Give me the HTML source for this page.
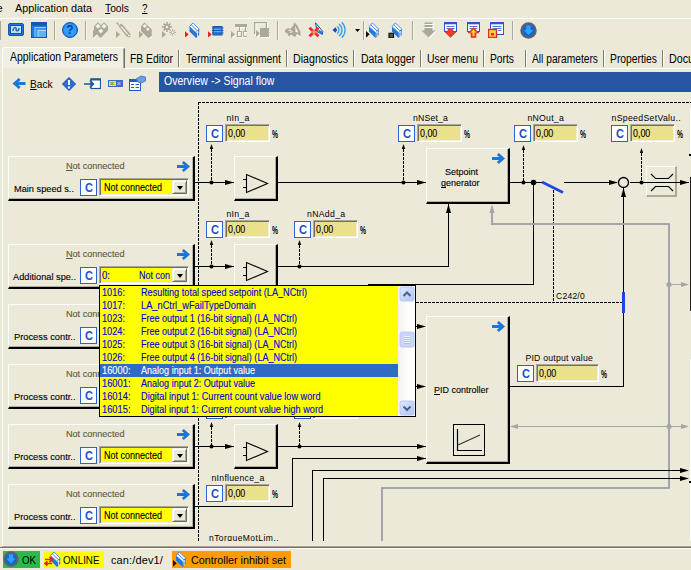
<!DOCTYPE html><html><head><meta charset="utf-8"><title>Signal flow</title><style>

html,body{margin:0;padding:0}
body{width:691px;height:570px;overflow:hidden;background:#ECE9D8;position:relative;font-family:"Liberation Sans", sans-serif;}
.abs{position:absolute}
.t{position:absolute;white-space:pre;line-height:normal;transform-origin:0 0;}
.t u{text-decoration:underline;text-underline-offset:1px;text-decoration-skip-ink:none}
.blk{position:absolute;box-shadow:inset -1px -1px 0 rgba(0,0,0,.25);background:#ECE9D8;border-top:1px solid #fff;border-left:1px solid #fff;border-right:2px solid #000;border-bottom:2px solid #000;z-index:2}
.blk3{position:absolute;background:#ECE9D8;border-top:1px solid #fff;border-left:1px solid #fff;border-right:3px solid #000;border-bottom:3px solid #000;z-index:2}
.cb{position:absolute;width:15px;height:15px;border:1px solid #2A62D0;background:#fff}
.vf{position:absolute;height:18px;box-sizing:border-box;background:#EBE08C;border:1px solid;border-color:#ACA899 #fff #fff #ACA899;box-shadow:inset 1px 1px 0 #716F64,inset -1px -1px 0 #F1EFE2}
.combo{position:absolute;width:90px;height:18px;z-index:3;box-sizing:border-box;border:1px solid;border-color:#ACA899 #fff #fff #ACA899;box-shadow:inset 1px 1px 0 #716F64,inset -1px -1px 0 #F1EFE2;background:#FFFF00}
.combo .cy{display:none}
.combo .cbtn{position:absolute;left:72px;top:1px;width:15px;height:14px;box-sizing:border-box;background:#ECE9D8;border:1px solid;border-color:#F1EFE2 #716F64 #716F64 #F1EFE2;box-shadow:inset 1px 1px 0 #fff,inset -1px -1px 0 #ACA899}
.combo .cbtn i{position:absolute;left:4px;top:5px;width:0;height:0;border-left:3.5px solid transparent;border-right:3.5px solid transparent;border-top:4px solid #000}
.clipb{}

</style></head><body>
<svg class="abs" style="left:0;top:0;z-index:1" width="691" height="570" viewBox="0 0 691 570" shape-rendering="crispEdges">
<rect x="198" y="102" width="3" height="1" fill="#000"/>
<rect x="202" y="102" width="3" height="1" fill="#000"/>
<rect x="206" y="102" width="3" height="1" fill="#000"/>
<rect x="210" y="102" width="3" height="1" fill="#000"/>
<rect x="214" y="102" width="3" height="1" fill="#000"/>
<rect x="218" y="102" width="3" height="1" fill="#000"/>
<rect x="222" y="102" width="3" height="1" fill="#000"/>
<rect x="226" y="102" width="3" height="1" fill="#000"/>
<rect x="230" y="102" width="3" height="1" fill="#000"/>
<rect x="234" y="102" width="3" height="1" fill="#000"/>
<rect x="238" y="102" width="3" height="1" fill="#000"/>
<rect x="242" y="102" width="3" height="1" fill="#000"/>
<rect x="246" y="102" width="3" height="1" fill="#000"/>
<rect x="250" y="102" width="3" height="1" fill="#000"/>
<rect x="254" y="102" width="3" height="1" fill="#000"/>
<rect x="258" y="102" width="3" height="1" fill="#000"/>
<rect x="262" y="102" width="3" height="1" fill="#000"/>
<rect x="266" y="102" width="3" height="1" fill="#000"/>
<rect x="270" y="102" width="3" height="1" fill="#000"/>
<rect x="274" y="102" width="3" height="1" fill="#000"/>
<rect x="278" y="102" width="3" height="1" fill="#000"/>
<rect x="282" y="102" width="3" height="1" fill="#000"/>
<rect x="286" y="102" width="3" height="1" fill="#000"/>
<rect x="290" y="102" width="3" height="1" fill="#000"/>
<rect x="294" y="102" width="3" height="1" fill="#000"/>
<rect x="298" y="102" width="3" height="1" fill="#000"/>
<rect x="302" y="102" width="3" height="1" fill="#000"/>
<rect x="306" y="102" width="3" height="1" fill="#000"/>
<rect x="310" y="102" width="3" height="1" fill="#000"/>
<rect x="314" y="102" width="3" height="1" fill="#000"/>
<rect x="318" y="102" width="3" height="1" fill="#000"/>
<rect x="322" y="102" width="3" height="1" fill="#000"/>
<rect x="326" y="102" width="3" height="1" fill="#000"/>
<rect x="330" y="102" width="3" height="1" fill="#000"/>
<rect x="334" y="102" width="3" height="1" fill="#000"/>
<rect x="338" y="102" width="3" height="1" fill="#000"/>
<rect x="342" y="102" width="3" height="1" fill="#000"/>
<rect x="346" y="102" width="3" height="1" fill="#000"/>
<rect x="350" y="102" width="3" height="1" fill="#000"/>
<rect x="354" y="102" width="3" height="1" fill="#000"/>
<rect x="358" y="102" width="3" height="1" fill="#000"/>
<rect x="362" y="102" width="3" height="1" fill="#000"/>
<rect x="366" y="102" width="3" height="1" fill="#000"/>
<rect x="370" y="102" width="3" height="1" fill="#000"/>
<rect x="374" y="102" width="3" height="1" fill="#000"/>
<rect x="378" y="102" width="3" height="1" fill="#000"/>
<rect x="382" y="102" width="3" height="1" fill="#000"/>
<rect x="386" y="102" width="3" height="1" fill="#000"/>
<rect x="390" y="102" width="3" height="1" fill="#000"/>
<rect x="394" y="102" width="3" height="1" fill="#000"/>
<rect x="398" y="102" width="3" height="1" fill="#000"/>
<rect x="402" y="102" width="3" height="1" fill="#000"/>
<rect x="406" y="102" width="3" height="1" fill="#000"/>
<rect x="410" y="102" width="3" height="1" fill="#000"/>
<rect x="414" y="102" width="3" height="1" fill="#000"/>
<rect x="418" y="102" width="3" height="1" fill="#000"/>
<rect x="422" y="102" width="3" height="1" fill="#000"/>
<rect x="426" y="102" width="3" height="1" fill="#000"/>
<rect x="430" y="102" width="3" height="1" fill="#000"/>
<rect x="434" y="102" width="3" height="1" fill="#000"/>
<rect x="438" y="102" width="3" height="1" fill="#000"/>
<rect x="442" y="102" width="3" height="1" fill="#000"/>
<rect x="446" y="102" width="3" height="1" fill="#000"/>
<rect x="450" y="102" width="3" height="1" fill="#000"/>
<rect x="454" y="102" width="3" height="1" fill="#000"/>
<rect x="458" y="102" width="3" height="1" fill="#000"/>
<rect x="462" y="102" width="3" height="1" fill="#000"/>
<rect x="466" y="102" width="3" height="1" fill="#000"/>
<rect x="470" y="102" width="3" height="1" fill="#000"/>
<rect x="474" y="102" width="3" height="1" fill="#000"/>
<rect x="478" y="102" width="3" height="1" fill="#000"/>
<rect x="482" y="102" width="3" height="1" fill="#000"/>
<rect x="486" y="102" width="3" height="1" fill="#000"/>
<rect x="490" y="102" width="3" height="1" fill="#000"/>
<rect x="494" y="102" width="3" height="1" fill="#000"/>
<rect x="498" y="102" width="3" height="1" fill="#000"/>
<rect x="502" y="102" width="3" height="1" fill="#000"/>
<rect x="506" y="102" width="3" height="1" fill="#000"/>
<rect x="510" y="102" width="3" height="1" fill="#000"/>
<rect x="514" y="102" width="3" height="1" fill="#000"/>
<rect x="518" y="102" width="3" height="1" fill="#000"/>
<rect x="522" y="102" width="3" height="1" fill="#000"/>
<rect x="526" y="102" width="3" height="1" fill="#000"/>
<rect x="530" y="102" width="3" height="1" fill="#000"/>
<rect x="534" y="102" width="3" height="1" fill="#000"/>
<rect x="538" y="102" width="3" height="1" fill="#000"/>
<rect x="542" y="102" width="3" height="1" fill="#000"/>
<rect x="546" y="102" width="3" height="1" fill="#000"/>
<rect x="550" y="102" width="3" height="1" fill="#000"/>
<rect x="554" y="102" width="3" height="1" fill="#000"/>
<rect x="558" y="102" width="3" height="1" fill="#000"/>
<rect x="562" y="102" width="3" height="1" fill="#000"/>
<rect x="566" y="102" width="3" height="1" fill="#000"/>
<rect x="570" y="102" width="3" height="1" fill="#000"/>
<rect x="574" y="102" width="3" height="1" fill="#000"/>
<rect x="578" y="102" width="3" height="1" fill="#000"/>
<rect x="582" y="102" width="3" height="1" fill="#000"/>
<rect x="586" y="102" width="3" height="1" fill="#000"/>
<rect x="590" y="102" width="3" height="1" fill="#000"/>
<rect x="594" y="102" width="3" height="1" fill="#000"/>
<rect x="598" y="102" width="3" height="1" fill="#000"/>
<rect x="602" y="102" width="3" height="1" fill="#000"/>
<rect x="606" y="102" width="3" height="1" fill="#000"/>
<rect x="610" y="102" width="3" height="1" fill="#000"/>
<rect x="614" y="102" width="3" height="1" fill="#000"/>
<rect x="618" y="102" width="3" height="1" fill="#000"/>
<rect x="622" y="102" width="3" height="1" fill="#000"/>
<rect x="626" y="102" width="3" height="1" fill="#000"/>
<rect x="630" y="102" width="3" height="1" fill="#000"/>
<rect x="634" y="102" width="3" height="1" fill="#000"/>
<rect x="638" y="102" width="3" height="1" fill="#000"/>
<rect x="642" y="102" width="3" height="1" fill="#000"/>
<rect x="646" y="102" width="3" height="1" fill="#000"/>
<rect x="650" y="102" width="3" height="1" fill="#000"/>
<rect x="654" y="102" width="3" height="1" fill="#000"/>
<rect x="658" y="102" width="3" height="1" fill="#000"/>
<rect x="662" y="102" width="3" height="1" fill="#000"/>
<rect x="666" y="102" width="3" height="1" fill="#000"/>
<rect x="670" y="102" width="3" height="1" fill="#000"/>
<rect x="674" y="102" width="3" height="1" fill="#000"/>
<rect x="678" y="102" width="3" height="1" fill="#000"/>
<rect x="682" y="102" width="3" height="1" fill="#000"/>
<rect x="686" y="102" width="3" height="1" fill="#000"/>
<rect x="690" y="102" width="1" height="1" fill="#000"/>
<rect x="198" y="102" width="1" height="3" fill="#000"/>
<rect x="198" y="106" width="1" height="3" fill="#000"/>
<rect x="198" y="110" width="1" height="3" fill="#000"/>
<rect x="198" y="114" width="1" height="3" fill="#000"/>
<rect x="198" y="118" width="1" height="3" fill="#000"/>
<rect x="198" y="122" width="1" height="3" fill="#000"/>
<rect x="198" y="126" width="1" height="3" fill="#000"/>
<rect x="198" y="130" width="1" height="3" fill="#000"/>
<rect x="198" y="134" width="1" height="3" fill="#000"/>
<rect x="198" y="138" width="1" height="3" fill="#000"/>
<rect x="198" y="142" width="1" height="3" fill="#000"/>
<rect x="198" y="146" width="1" height="3" fill="#000"/>
<rect x="198" y="150" width="1" height="3" fill="#000"/>
<rect x="198" y="154" width="1" height="3" fill="#000"/>
<rect x="198" y="158" width="1" height="3" fill="#000"/>
<rect x="198" y="162" width="1" height="3" fill="#000"/>
<rect x="198" y="166" width="1" height="3" fill="#000"/>
<rect x="198" y="170" width="1" height="3" fill="#000"/>
<rect x="198" y="174" width="1" height="3" fill="#000"/>
<rect x="198" y="178" width="1" height="3" fill="#000"/>
<rect x="198" y="182" width="1" height="3" fill="#000"/>
<rect x="198" y="186" width="1" height="3" fill="#000"/>
<rect x="198" y="190" width="1" height="3" fill="#000"/>
<rect x="198" y="194" width="1" height="3" fill="#000"/>
<rect x="198" y="198" width="1" height="3" fill="#000"/>
<rect x="198" y="202" width="1" height="3" fill="#000"/>
<rect x="198" y="206" width="1" height="3" fill="#000"/>
<rect x="198" y="210" width="1" height="3" fill="#000"/>
<rect x="198" y="214" width="1" height="3" fill="#000"/>
<rect x="198" y="218" width="1" height="3" fill="#000"/>
<rect x="198" y="222" width="1" height="3" fill="#000"/>
<rect x="198" y="226" width="1" height="3" fill="#000"/>
<rect x="198" y="230" width="1" height="3" fill="#000"/>
<rect x="198" y="234" width="1" height="3" fill="#000"/>
<rect x="198" y="238" width="1" height="3" fill="#000"/>
<rect x="198" y="242" width="1" height="3" fill="#000"/>
<rect x="198" y="246" width="1" height="3" fill="#000"/>
<rect x="198" y="250" width="1" height="3" fill="#000"/>
<rect x="198" y="254" width="1" height="3" fill="#000"/>
<rect x="198" y="258" width="1" height="3" fill="#000"/>
<rect x="198" y="262" width="1" height="3" fill="#000"/>
<rect x="198" y="266" width="1" height="3" fill="#000"/>
<rect x="198" y="270" width="1" height="3" fill="#000"/>
<rect x="198" y="274" width="1" height="3" fill="#000"/>
<rect x="198" y="278" width="1" height="3" fill="#000"/>
<rect x="198" y="282" width="1" height="3" fill="#000"/>
<rect x="198" y="286" width="1" height="3" fill="#000"/>
<rect x="198" y="290" width="1" height="3" fill="#000"/>
<rect x="198" y="294" width="1" height="3" fill="#000"/>
<rect x="198" y="298" width="1" height="3" fill="#000"/>
<rect x="198" y="302" width="1" height="3" fill="#000"/>
<rect x="198" y="306" width="1" height="3" fill="#000"/>
<rect x="198" y="310" width="1" height="3" fill="#000"/>
<rect x="198" y="314" width="1" height="3" fill="#000"/>
<rect x="198" y="318" width="1" height="3" fill="#000"/>
<rect x="198" y="322" width="1" height="3" fill="#000"/>
<rect x="198" y="326" width="1" height="3" fill="#000"/>
<rect x="198" y="330" width="1" height="3" fill="#000"/>
<rect x="198" y="334" width="1" height="3" fill="#000"/>
<rect x="198" y="338" width="1" height="3" fill="#000"/>
<rect x="198" y="342" width="1" height="3" fill="#000"/>
<rect x="198" y="346" width="1" height="3" fill="#000"/>
<rect x="198" y="350" width="1" height="3" fill="#000"/>
<rect x="198" y="354" width="1" height="3" fill="#000"/>
<rect x="198" y="358" width="1" height="3" fill="#000"/>
<rect x="198" y="362" width="1" height="3" fill="#000"/>
<rect x="198" y="366" width="1" height="3" fill="#000"/>
<rect x="198" y="370" width="1" height="3" fill="#000"/>
<rect x="198" y="374" width="1" height="3" fill="#000"/>
<rect x="198" y="378" width="1" height="3" fill="#000"/>
<rect x="198" y="382" width="1" height="3" fill="#000"/>
<rect x="198" y="386" width="1" height="3" fill="#000"/>
<rect x="198" y="390" width="1" height="3" fill="#000"/>
<rect x="198" y="394" width="1" height="3" fill="#000"/>
<rect x="198" y="398" width="1" height="3" fill="#000"/>
<rect x="198" y="402" width="1" height="3" fill="#000"/>
<rect x="198" y="406" width="1" height="3" fill="#000"/>
<rect x="198" y="410" width="1" height="3" fill="#000"/>
<rect x="198" y="414" width="1" height="3" fill="#000"/>
<rect x="198" y="418" width="1" height="3" fill="#000"/>
<rect x="198" y="422" width="1" height="3" fill="#000"/>
<rect x="198" y="426" width="1" height="3" fill="#000"/>
<rect x="198" y="430" width="1" height="3" fill="#000"/>
<rect x="198" y="434" width="1" height="3" fill="#000"/>
<rect x="198" y="438" width="1" height="3" fill="#000"/>
<rect x="198" y="442" width="1" height="3" fill="#000"/>
<rect x="198" y="446" width="1" height="3" fill="#000"/>
<rect x="198" y="450" width="1" height="3" fill="#000"/>
<rect x="198" y="454" width="1" height="3" fill="#000"/>
<rect x="198" y="458" width="1" height="3" fill="#000"/>
<rect x="198" y="462" width="1" height="3" fill="#000"/>
<rect x="198" y="466" width="1" height="3" fill="#000"/>
<rect x="198" y="470" width="1" height="3" fill="#000"/>
<rect x="198" y="474" width="1" height="3" fill="#000"/>
<rect x="198" y="478" width="1" height="3" fill="#000"/>
<rect x="198" y="482" width="1" height="3" fill="#000"/>
<rect x="198" y="486" width="1" height="3" fill="#000"/>
<rect x="198" y="490" width="1" height="3" fill="#000"/>
<rect x="198" y="494" width="1" height="3" fill="#000"/>
<rect x="198" y="498" width="1" height="3" fill="#000"/>
<rect x="198" y="502" width="1" height="3" fill="#000"/>
<rect x="198" y="506" width="1" height="3" fill="#000"/>
<rect x="198" y="510" width="1" height="3" fill="#000"/>
<rect x="198" y="514" width="1" height="3" fill="#000"/>
<rect x="198" y="518" width="1" height="3" fill="#000"/>
<rect x="198" y="522" width="1" height="3" fill="#000"/>
<rect x="198" y="526" width="1" height="3" fill="#000"/>
<rect x="198" y="530" width="1" height="3" fill="#000"/>
<rect x="198" y="534" width="1" height="3" fill="#000"/>
<rect x="198" y="538" width="1" height="3" fill="#000"/>
<rect x="194" y="182" width="40" height="1" fill="#000"/>
<polygon points="234,182.5 225,180.0 225,185.0" fill="#000" shape-rendering="geometricPrecision"/>
<polygon points="211.5,144 209.8,149 213.2,149" fill="#000" shape-rendering="geometricPrecision"/>
<rect x="211" y="149" width="1" height="3" fill="#000"/>
<rect x="211" y="153" width="1" height="3" fill="#000"/>
<rect x="211" y="157" width="1" height="3" fill="#000"/>
<rect x="211" y="161" width="1" height="3" fill="#000"/>
<rect x="211" y="165" width="1" height="3" fill="#000"/>
<rect x="211" y="169" width="1" height="3" fill="#000"/>
<rect x="211" y="173" width="1" height="3" fill="#000"/>
<rect x="211" y="177" width="1" height="3" fill="#000"/>
<rect x="211" y="181" width="1" height="1" fill="#000"/>
<circle cx="211.5" cy="182.5" r="2.1" fill="#000" shape-rendering="geometricPrecision"/>
<rect x="278" y="182" width="148" height="1" fill="#000"/>
<polygon points="426,182.5 417,180.0 417,185.0" fill="#000" shape-rendering="geometricPrecision"/>
<polygon points="403.5,144 401.8,149 405.2,149" fill="#000" shape-rendering="geometricPrecision"/>
<rect x="403" y="149" width="1" height="3" fill="#000"/>
<rect x="403" y="153" width="1" height="3" fill="#000"/>
<rect x="403" y="157" width="1" height="3" fill="#000"/>
<rect x="403" y="161" width="1" height="3" fill="#000"/>
<rect x="403" y="165" width="1" height="3" fill="#000"/>
<rect x="403" y="169" width="1" height="3" fill="#000"/>
<rect x="403" y="173" width="1" height="3" fill="#000"/>
<rect x="403" y="177" width="1" height="3" fill="#000"/>
<rect x="403" y="181" width="1" height="1" fill="#000"/>
<circle cx="403.5" cy="182.5" r="2.1" fill="#000" shape-rendering="geometricPrecision"/>
<rect x="510" y="182" width="33" height="1" fill="#000"/>
<polygon points="523.5,145 521.8,150 525.2,150" fill="#000" shape-rendering="geometricPrecision"/>
<rect x="523" y="150" width="1" height="3" fill="#000"/>
<rect x="523" y="154" width="1" height="3" fill="#000"/>
<rect x="523" y="158" width="1" height="3" fill="#000"/>
<rect x="523" y="162" width="1" height="3" fill="#000"/>
<rect x="523" y="166" width="1" height="3" fill="#000"/>
<rect x="523" y="170" width="1" height="3" fill="#000"/>
<rect x="523" y="174" width="1" height="3" fill="#000"/>
<rect x="523" y="178" width="1" height="3" fill="#000"/>
<circle cx="523.5" cy="182.5" r="2.1" fill="#000" shape-rendering="geometricPrecision"/>
<circle cx="533.5" cy="182.5" r="2.8" fill="#000" shape-rendering="geometricPrecision"/>
<line x1="542" y1="182" x2="563" y2="192.500" stroke="#1E46E6" stroke-width="2.600" shape-rendering="geometricPrecision"/>
<rect x="564" y="182" width="53" height="1" fill="#000"/>
<polygon points="618,182.5 609,180.0 609,185.0" fill="#000" shape-rendering="geometricPrecision"/>
<circle cx="623.500" cy="182.500" r="5" fill="#ECE9D8" stroke="#000" stroke-width="1.300" shape-rendering="geometricPrecision"/>
<rect x="630" y="182" width="59" height="1" fill="#000"/>
<polygon points="641.5,148 639.8,153 643.2,153" fill="#000" shape-rendering="geometricPrecision"/>
<rect x="641" y="153" width="1" height="3" fill="#000"/>
<rect x="641" y="157" width="1" height="3" fill="#000"/>
<rect x="641" y="161" width="1" height="3" fill="#000"/>
<rect x="641" y="165" width="1" height="3" fill="#000"/>
<rect x="641" y="169" width="1" height="3" fill="#000"/>
<rect x="641" y="173" width="1" height="3" fill="#000"/>
<rect x="641" y="177" width="1" height="3" fill="#000"/>
<rect x="641" y="181" width="1" height="1" fill="#000"/>
<circle cx="641.5" cy="182.5" r="2.1" fill="#000" shape-rendering="geometricPrecision"/>
<polygon points="689,182.5 680,180.0 680,185.0" fill="#000" shape-rendering="geometricPrecision"/>
<rect x="533" y="182" width="1" height="103" fill="#000"/>
<rect x="368" y="284" width="166" height="1" fill="#000"/>
<rect x="553" y="190" width="1" height="3" fill="#000"/>
<rect x="553" y="194" width="1" height="3" fill="#000"/>
<rect x="553" y="198" width="1" height="3" fill="#000"/>
<rect x="553" y="202" width="1" height="3" fill="#000"/>
<rect x="553" y="206" width="1" height="3" fill="#000"/>
<rect x="553" y="210" width="1" height="3" fill="#000"/>
<rect x="553" y="214" width="1" height="3" fill="#000"/>
<rect x="553" y="218" width="1" height="3" fill="#000"/>
<rect x="553" y="222" width="1" height="3" fill="#000"/>
<rect x="553" y="226" width="1" height="3" fill="#000"/>
<rect x="553" y="230" width="1" height="3" fill="#000"/>
<rect x="553" y="234" width="1" height="3" fill="#000"/>
<rect x="553" y="238" width="1" height="3" fill="#000"/>
<rect x="553" y="242" width="1" height="3" fill="#000"/>
<rect x="553" y="246" width="1" height="3" fill="#000"/>
<rect x="553" y="250" width="1" height="3" fill="#000"/>
<rect x="553" y="254" width="1" height="3" fill="#000"/>
<rect x="553" y="258" width="1" height="3" fill="#000"/>
<rect x="553" y="262" width="1" height="3" fill="#000"/>
<rect x="553" y="266" width="1" height="3" fill="#000"/>
<rect x="553" y="270" width="1" height="3" fill="#000"/>
<rect x="553" y="274" width="1" height="3" fill="#000"/>
<rect x="553" y="278" width="1" height="3" fill="#000"/>
<rect x="553" y="282" width="1" height="3" fill="#000"/>
<rect x="553" y="286" width="1" height="3" fill="#000"/>
<rect x="553" y="290" width="1" height="3" fill="#000"/>
<rect x="553" y="294" width="1" height="3" fill="#000"/>
<rect x="553" y="298" width="1" height="3" fill="#000"/>
<rect x="553" y="302" width="1" height="1" fill="#000"/>
<rect x="416" y="302" width="3" height="1" fill="#000"/>
<rect x="420" y="302" width="3" height="1" fill="#000"/>
<rect x="424" y="302" width="3" height="1" fill="#000"/>
<rect x="428" y="302" width="3" height="1" fill="#000"/>
<rect x="432" y="302" width="3" height="1" fill="#000"/>
<rect x="436" y="302" width="3" height="1" fill="#000"/>
<rect x="440" y="302" width="3" height="1" fill="#000"/>
<rect x="444" y="302" width="3" height="1" fill="#000"/>
<rect x="448" y="302" width="3" height="1" fill="#000"/>
<rect x="452" y="302" width="3" height="1" fill="#000"/>
<rect x="456" y="302" width="3" height="1" fill="#000"/>
<rect x="460" y="302" width="3" height="1" fill="#000"/>
<rect x="464" y="302" width="3" height="1" fill="#000"/>
<rect x="468" y="302" width="3" height="1" fill="#000"/>
<rect x="472" y="302" width="3" height="1" fill="#000"/>
<rect x="476" y="302" width="3" height="1" fill="#000"/>
<rect x="480" y="302" width="3" height="1" fill="#000"/>
<rect x="484" y="302" width="3" height="1" fill="#000"/>
<rect x="488" y="302" width="3" height="1" fill="#000"/>
<rect x="492" y="302" width="3" height="1" fill="#000"/>
<rect x="496" y="302" width="3" height="1" fill="#000"/>
<rect x="500" y="302" width="3" height="1" fill="#000"/>
<rect x="504" y="302" width="3" height="1" fill="#000"/>
<rect x="508" y="302" width="3" height="1" fill="#000"/>
<rect x="512" y="302" width="3" height="1" fill="#000"/>
<rect x="516" y="302" width="3" height="1" fill="#000"/>
<rect x="520" y="302" width="3" height="1" fill="#000"/>
<rect x="524" y="302" width="3" height="1" fill="#000"/>
<rect x="528" y="302" width="3" height="1" fill="#000"/>
<rect x="532" y="302" width="3" height="1" fill="#000"/>
<rect x="536" y="302" width="3" height="1" fill="#000"/>
<rect x="540" y="302" width="3" height="1" fill="#000"/>
<rect x="544" y="302" width="3" height="1" fill="#000"/>
<rect x="548" y="302" width="3" height="1" fill="#000"/>
<rect x="552" y="302" width="3" height="1" fill="#000"/>
<rect x="556" y="302" width="3" height="1" fill="#000"/>
<rect x="560" y="302" width="3" height="1" fill="#000"/>
<rect x="564" y="302" width="3" height="1" fill="#000"/>
<rect x="568" y="302" width="3" height="1" fill="#000"/>
<rect x="572" y="302" width="3" height="1" fill="#000"/>
<rect x="576" y="302" width="3" height="1" fill="#000"/>
<rect x="580" y="302" width="3" height="1" fill="#000"/>
<rect x="584" y="302" width="3" height="1" fill="#000"/>
<rect x="588" y="302" width="3" height="1" fill="#000"/>
<rect x="592" y="302" width="3" height="1" fill="#000"/>
<rect x="596" y="302" width="3" height="1" fill="#000"/>
<rect x="600" y="302" width="3" height="1" fill="#000"/>
<rect x="604" y="302" width="3" height="1" fill="#000"/>
<rect x="608" y="302" width="3" height="1" fill="#000"/>
<rect x="612" y="302" width="3" height="1" fill="#000"/>
<rect x="616" y="302" width="3" height="1" fill="#000"/>
<rect x="620" y="302" width="2" height="1" fill="#000"/>
<rect x="623" y="188" width="1" height="199" fill="#000"/>
<polygon points="623.5,188 621.0,197 626.0,197" fill="#000" shape-rendering="geometricPrecision"/>
<rect x="622" y="292" width="3" height="21" fill="#1E46E6"/>
<rect x="510" y="386" width="114" height="1" fill="#000"/>
<rect x="194" y="266" width="40" height="1" fill="#000"/>
<polygon points="234,266.5 225,264.0 225,269.0" fill="#000" shape-rendering="geometricPrecision"/>
<polygon points="211.5,240 209.8,245 213.2,245" fill="#000" shape-rendering="geometricPrecision"/>
<rect x="211" y="245" width="1" height="3" fill="#000"/>
<rect x="211" y="249" width="1" height="3" fill="#000"/>
<rect x="211" y="253" width="1" height="3" fill="#000"/>
<rect x="211" y="257" width="1" height="3" fill="#000"/>
<rect x="211" y="261" width="1" height="3" fill="#000"/>
<rect x="211" y="265" width="1" height="1" fill="#000"/>
<circle cx="211.5" cy="266.5" r="2.1" fill="#000" shape-rendering="geometricPrecision"/>
<rect x="278" y="266" width="171" height="1" fill="#000"/>
<polygon points="299.5,240 297.8,245 301.2,245" fill="#000" shape-rendering="geometricPrecision"/>
<rect x="299" y="245" width="1" height="3" fill="#000"/>
<rect x="299" y="249" width="1" height="3" fill="#000"/>
<rect x="299" y="253" width="1" height="3" fill="#000"/>
<rect x="299" y="257" width="1" height="3" fill="#000"/>
<rect x="299" y="261" width="1" height="3" fill="#000"/>
<rect x="299" y="265" width="1" height="1" fill="#000"/>
<circle cx="299.5" cy="266.5" r="2.1" fill="#000" shape-rendering="geometricPrecision"/>
<rect x="448" y="204" width="1" height="63" fill="#000"/>
<polygon points="448.5,204 446.0,213 451.0,213" fill="#000" shape-rendering="geometricPrecision"/>
<rect x="491" y="212" width="2" height="13" fill="#A5A5AB"/>
<polygon points="492,204 489.500,213 494.500,213" fill="#A5A5AB" shape-rendering="geometricPrecision"/>
<rect x="491" y="223" width="179" height="2" fill="#A5A5AB"/>
<rect x="668" y="223" width="2" height="266" fill="#A5A5AB"/>
<rect x="381" y="487" width="289" height="2" fill="#A5A5AB"/>
<rect x="381" y="487" width="2" height="55" fill="#A5A5AB"/>
<circle cx="669.0" cy="284.5" r="2.6" fill="#A5A5AB" shape-rendering="geometricPrecision"/>
<rect x="669" y="284" width="14" height="1" fill="#A5A5AB"/>
<polygon points="689,284.5 681,282.0 681,287.0" fill="#A5A5AB" shape-rendering="geometricPrecision"/>
<circle cx="669.0" cy="426.5" r="2.6" fill="#A5A5AB" shape-rendering="geometricPrecision"/>
<rect x="518" y="426" width="165" height="1" fill="#A5A5AB"/>
<polygon points="689,426.5 681,424.0 681,429.0" fill="#A5A5AB" shape-rendering="geometricPrecision"/>
<polygon points="510,426.5 518,424.0 518,429.0" fill="#A5A5AB" shape-rendering="geometricPrecision"/>
<polygon points="426,326.5 417,324.0 417,329.0" fill="#000" shape-rendering="geometricPrecision"/>
<rect x="416" y="326" width="5" height="1" fill="#000"/>
<polygon points="426,386.5 417,384.0 417,389.0" fill="#000" shape-rendering="geometricPrecision"/>
<rect x="416" y="386" width="5" height="1" fill="#000"/>
<rect x="194" y="446" width="40" height="1" fill="#000"/>
<polygon points="234,446.5 225,444.0 225,449.0" fill="#000" shape-rendering="geometricPrecision"/>
<polygon points="211.5,422 209.8,427 213.2,427" fill="#000" shape-rendering="geometricPrecision"/>
<rect x="211" y="427" width="1" height="3" fill="#000"/>
<rect x="211" y="431" width="1" height="3" fill="#000"/>
<rect x="211" y="435" width="1" height="3" fill="#000"/>
<rect x="211" y="439" width="1" height="3" fill="#000"/>
<rect x="211" y="443" width="1" height="3" fill="#000"/>
<circle cx="211.5" cy="446.5" r="2.1" fill="#000" shape-rendering="geometricPrecision"/>
<rect x="278" y="446" width="148" height="1" fill="#000"/>
<polygon points="426,446.5 417,444.0 417,449.0" fill="#000" shape-rendering="geometricPrecision"/>
<polygon points="299.5,422 297.8,427 301.2,427" fill="#000" shape-rendering="geometricPrecision"/>
<rect x="299" y="427" width="1" height="3" fill="#000"/>
<rect x="299" y="431" width="1" height="3" fill="#000"/>
<rect x="299" y="435" width="1" height="3" fill="#000"/>
<rect x="299" y="439" width="1" height="3" fill="#000"/>
<rect x="299" y="443" width="1" height="3" fill="#000"/>
<circle cx="299.5" cy="446.5" r="2.1" fill="#000" shape-rendering="geometricPrecision"/>
<rect x="194" y="506" width="99" height="1" fill="#000"/>
<rect x="292" y="458" width="1" height="49" fill="#000"/>
<rect x="292" y="458" width="134" height="1" fill="#000"/>
<polygon points="426,458.5 417,456.0 417,461.0" fill="#000" shape-rendering="geometricPrecision"/>
<rect x="312" y="470" width="1" height="72" fill="#000"/>
<rect x="312" y="470" width="369" height="1" fill="#000"/>
<polygon points="689,470.5 680,468.0 680,473.0" fill="#000" shape-rendering="geometricPrecision"/>
<rect x="323" y="478" width="1" height="64" fill="#000"/>
<rect x="323" y="478" width="358" height="1" fill="#000"/>
<polygon points="689,478.5 680,476.0 680,481.0" fill="#000" shape-rendering="geometricPrecision"/>
<rect x="690" y="177" width="1" height="134" fill="#222"/>
<rect x="690" y="108" width="1" height="45" fill="#fff"/>
<rect x="690" y="359" width="1" height="183" fill="#fff"/>
<rect x="689" y="154" width="2" height="2" fill="#000"/>
<rect x="689" y="481" width="2" height="2" fill="#000"/>
</svg>
<div class="abs" style="left:0;top:18px;width:691px;height:1px;background:#fff"></div>
<div class="abs" style="left:54px;top:21px;width:1px;height:19px;background:#ACA899"></div><div class="abs" style="left:55px;top:21px;width:1px;height:19px;background:#F6F4EC"></div>
<div class="abs" style="left:85px;top:21px;width:1px;height:19px;background:#ACA899"></div><div class="abs" style="left:86px;top:21px;width:1px;height:19px;background:#F6F4EC"></div>
<div class="abs" style="left:277px;top:21px;width:1px;height:19px;background:#ACA899"></div><div class="abs" style="left:278px;top:21px;width:1px;height:19px;background:#F6F4EC"></div>
<div class="abs" style="left:363px;top:21px;width:1px;height:19px;background:#ACA899"></div><div class="abs" style="left:364px;top:21px;width:1px;height:19px;background:#F6F4EC"></div>
<div class="abs" style="left:412px;top:21px;width:1px;height:19px;background:#ACA899"></div><div class="abs" style="left:413px;top:21px;width:1px;height:19px;background:#F6F4EC"></div>
<div class="abs" style="left:512px;top:21px;width:1px;height:19px;background:#ACA899"></div><div class="abs" style="left:513px;top:21px;width:1px;height:19px;background:#F6F4EC"></div>
<div class="abs" style="left:0;top:21px;width:1px;height:19px;background:#ACA899"></div>
<svg class="abs" style="left:8px;top:22px" width="16" height="16" viewBox="0 0 16 16"><rect x="0.5" y="1.5" width="15" height="12" rx="1.5" fill="#1E78E0" stroke="#1556B0"/><rect x="2.5" y="3.5" width="11" height="8" fill="#BFE0FF" stroke="#0F4FA8"/><path d="M5 9c0-3 2-4 3-3s-1 3 1 3 2-2 2-3" fill="none" stroke="#0F4FA8" stroke-width="1.2"/></svg>
<svg class="abs" style="left:31px;top:22px" width="16" height="16" viewBox="0 0 16 16"><rect x="0.500" y="0.500" width="15" height="15" fill="#1E78E0" stroke="#1556B0"/><rect x="1" y="1" width="14" height="2.500" fill="#1556B0"/><rect x="4" y="5.500" width="11" height="9.500" fill="#3C94F0"/><rect x="4" y="5" width="11" height="1" fill="#9CCBFF"/><rect x="3.500" y="5" width="1" height="10" fill="#9CCBFF"/><rect x="7" y="8.500" width="8" height="6.500" fill="#64B0FA"/><rect x="7" y="8" width="8" height="1" fill="#B8DCFF"/><rect x="6.500" y="8" width="1" height="7" fill="#B8DCFF"/></svg>
<svg class="abs" style="left:62px;top:22px" width="16" height="16" viewBox="0 0 16 16"><circle cx="8" cy="8" r="7.5" fill="#1E8CF0" stroke="#1556B0"/><circle cx="8" cy="8" r="6" fill="#2FA0FF"/><text x="8" y="12.2" font-size="12" font-weight="bold" text-anchor="middle" fill="#0A3C96" font-family="Liberation Sans, sans-serif">?</text></svg>
<svg class="abs" style="left:92px;top:22px" width="16" height="16" viewBox="0 0 16 16"><path d="M2 4.300L6 0.300L9 3.300L12 0.300L16 4.300V8.500L8.700 16L5 12.500L1 16V9L2 8Z" fill="#ACA899"/><path d="M6 1.800L8.500 4.300L6 6.800L3.500 4.300ZM12 1.800L14.500 4.300L12 6.800L9.500 4.300ZM8.800 6.500L11.300 9L8.800 11.500L6.300 9Z" fill="#F4F2EA"/><path d="M5 12.700L1.500 16.500" stroke="#fff"/></svg>
<svg class="abs" style="left:115px;top:22px" width="16" height="16" viewBox="0 0 16 16"><path d="M1 9L5 12.500L1 16Z" fill="#ACA899"/><path d="M1.500 0.500L4 3" stroke="#ACA899" stroke-width="1.200"/><path d="M3.500 4L6.500 1.500L15.500 12L15 15.500L11.500 14.500Z" fill="#ACA899"/><path d="M6 4.500L12.500 12" stroke="#F4F2EA" stroke-width="1.200"/><circle cx="13.800" cy="13.300" r="0.900" fill="#fff"/></svg>
<svg class="abs" style="left:138px;top:22px" width="16" height="16" viewBox="0 0 16 16"><path d="M1 9L5 12.500L1 16Z" fill="#ACA899"/><path d="M6.300 0.500L13.700 7.300V14L10.500 16.200L3 9V4.500Z" fill="#ACA899"/><path d="M6.700 2L8.700 4L6.700 6L4.700 4ZM9.800 5.500L11.600 7.300L9.800 9.100L8 7.300Z" fill="#F4F2EA"/><path d="M11 16.500L14.500 14.300" stroke="#fff"/></svg>
<svg class="abs" style="left:161px;top:22px" width="16" height="16" viewBox="0 0 16 16"><path d="M1 9L5 12.500L1 16Z" fill="#ACA899"/><path d="M10.9 4.1L10.9 5.9L9.1 5.7L8.7 6.7L10.1 7.8L8.8 9.1L7.7 7.7L6.7 8.1L6.9 9.9L5.1 9.9L5.3 8.1L4.3 7.7L3.2 9.1L1.9 7.8L3.3 6.7L2.9 5.7L1.1 5.9L1.1 4.1L2.9 4.3L3.3 3.3L1.9 2.2L3.2 0.9L4.3 2.3L5.3 1.9L5.1 0.1L6.9 0.1L6.7 1.9L7.7 2.3L8.8 0.9L10.1 2.2L8.7 3.3L9.1 4.3Z" fill="#ACA899"/><circle cx="6" cy="5" r="1.200" fill="#F4F2EA"/><circle cx="11.700" cy="10.300" r="3.300" fill="#F4F2EA"/><path d="M11.700 6.800V13.800M8.200 10.300H15.200M9.200 7.800L14.200 12.800M14.200 7.800L9.200 12.800" stroke="#ACA899" stroke-width="1"/><circle cx="11.700" cy="10.300" r="1" fill="#F4F2EA"/></svg>
<svg class="abs" style="left:184px;top:22px" width="16" height="16" viewBox="0 0 16 16"><path d="M1 9.300L4.700 12.400L1 15.500Z" fill="#F01E14"/><g transform="translate(1.500,0)"><path d="M4 4.700L10.500 10.500V16L4 9.500Z" fill="#1E78E0"/><path d="M4 4.700L7.300 1L13.700 7L10.500 10.500Z" fill="#fff" stroke="#1E78E0" stroke-width=".8"/><path d="M5.700 2.800L12 8.800" stroke="#1E78E0" stroke-width=".9"/><path d="M10.500 10.500L13.700 7V13L10.500 16Z" fill="#2C6CD8"/><path d="M12.100 9.500V14.500M11 11L12.100 9.300L13.200 10.500" fill="none" stroke="#E4F2FF" stroke-width="1"/></g></svg>
<svg class="abs" style="left:208px;top:22px" width="16" height="16" viewBox="0 0 16 16"><path d="M0 9.300L3.700 12.400L0 15.500Z" fill="#F01E14"/><rect x="5" y="4.500" width="9" height="8.500" fill="#2C7CE0" stroke="#1556B0"/><path d="M4 6H15.500M4 8.500H15.500M4 11H15.500" stroke="#1556B0" stroke-width="1.200"/><path d="M6 7.200H13M6 9.700H13" stroke="#6CB4FF" stroke-width="1"/></svg>
<svg class="abs" style="left:231px;top:22px" width="16" height="16" viewBox="0 0 16 16"><g transform="translate(1,1)"><path d="M0 9L4 12.5L0 16ZM4 2H17V5H4Z" fill="#fff"/><path d="M6.500 9.500H10.500V14.500H6.500ZM12.500 9.500H16.500V14.500H12.500ZM8.500 5V9M14.500 5V9" fill="none" stroke="#fff" stroke-width="1.2"/></g><g transform="translate(0,0)"><path d="M0 9L4 12.5L0 16ZM4 2H17V5H4Z" fill="#ACA899"/><path d="M6.500 9.500H10.500V14.500H6.500ZM12.500 9.500H16.500V14.500H12.500ZM8.500 5V9M14.500 5V9" fill="none" stroke="#ACA899" stroke-width="1.2"/></g></svg>
<svg class="abs" style="left:254px;top:22px" width="16" height="16" viewBox="0 0 16 16"><g transform="translate(1,1)"><path d="M2 8L6 11.5L2 15ZM6 6H15V15H6Z" fill="#fff"/><path d="M0.600 12V0.600H12.400V6" fill="none" stroke="#fff" stroke-width="1.4"/></g><g transform="translate(0,0)"><path d="M2 8L6 11.5L2 15ZM6 6H15V15H6Z" fill="#ACA899"/><path d="M0.600 12V0.600H12.400V6" fill="none" stroke="#ACA899" stroke-width="1.4"/></g><path d="M14 8H16M14 10.500H16M14 13H16" stroke="#C8C4B4"/></svg>
<svg class="abs" style="left:285px;top:22px" width="16" height="16" viewBox="0 0 16 16"><path d="M0 8L3 6L5 7L8 4L9.500 0.500L12 3L15.500 10V14.500L12 12L10 15L6 12.500L4 14.500L2 11L0 10.500Z" fill="#ACA899"/><path d="M10 4L13.500 10.500L10.500 10Z" fill="#F4F2EA"/><path d="M3.500 8.500H6.500M5 10.500L7.500 9.500" stroke="#F4F2EA" stroke-width="1.200"/><path d="M12 12.500L15.500 15" stroke="#fff"/></svg>
<svg class="abs" style="left:308px;top:22px" width="16" height="16" viewBox="0 0 16 16"><path d="M7.500 0.800L14.800 9.500L14.300 12.500L9 9.500Z" fill="#fff" stroke="#1450A0" stroke-width="1"/><path d="M10.500 7.500L14.300 9.500L13.800 12.300L10.300 10.500Z" fill="#2C7CE0"/><path d="M1.500 5.800L10.500 14.300M10.500 5.800L1.500 14.300" stroke="#F0282D" stroke-width="2.800"/><circle cx="6" cy="10" r="1.900" fill="#F5965A"/></svg>
<svg class="abs" style="left:331px;top:22px" width="16" height="16" viewBox="0 0 16 16"><path d="M1.500 8L4.500 5.300L6.200 8L4.500 10.700Z" fill="#1E46BE"/><path d="M6.200 4.200A5 5 0 0 1 6.200 11.800M8.100 1.900A8 8 0 0 1 8.100 14.100M10.800 0.200A11 11 0 0 1 10.800 15.800" fill="none" stroke="#2C9CF0" stroke-width="1.300"/></svg>
<svg class="abs" style="left:355px;top:29px" width="5" height="3" viewBox="0 0 5 3"><path d="M0 0H5L2.5 3Z" fill="#000"/></svg>
<svg class="abs" style="left:365px;top:22px" width="16" height="16" viewBox="0 0 16 16"><path d="M1 9L4.700 12.300L1 15.700Z" fill="#111"/><path d="M4 4.700L10.500 10.500V16L4 9.500Z" fill="#1E78E0"/><path d="M4 4.700L7.300 1L13.700 7L10.500 10.500Z" fill="#fff" stroke="#1E78E0" stroke-width=".8"/><path d="M5.700 2.800L12 8.800" stroke="#1E78E0" stroke-width=".9"/><path d="M10.500 10.500L13.700 7V13L10.500 16Z" fill="#2C6CD8"/><path d="M12.100 9.500V14.500M11 11L12.100 9.300L13.200 10.500" fill="none" stroke="#E4F2FF" stroke-width="1"/></svg>
<svg class="abs" style="left:388px;top:22px" width="16" height="16" viewBox="0 0 16 16"><rect x="1" y="11.300" width="4.500" height="4.500" fill="#555" stroke="#111" stroke-width="1.200"/><path d="M4 4.700L10.500 10.500V16L4 9.500Z" fill="#1E78E0"/><path d="M4 4.700L7.300 1L13.700 7L10.500 10.500Z" fill="#fff" stroke="#1E78E0" stroke-width=".8"/><path d="M5.700 2.800L12 8.800" stroke="#1E78E0" stroke-width=".9"/><path d="M10.500 10.500L13.700 7V13L10.500 16Z" fill="#2C6CD8"/><path d="M12.100 9.500V14.500M11 11L12.100 9.300L13.200 10.500" fill="none" stroke="#E4F2FF" stroke-width="1"/></svg>
<svg class="abs" style="left:421px;top:22px" width="16" height="16" viewBox="0 0 16 16"><g transform="translate(1,1)"><path d="M3.500 0.500H11.500V2H3.500ZM3.500 3H11.500V5H3.500ZM3.500 6H11.500V8.500H14.500L7.500 15.500L0.500 8.500H3.500Z" fill="#fff"/></g><g transform="translate(0,0)"><path d="M3.500 0.500H11.500V2H3.500ZM3.500 3H11.500V5H3.500ZM3.500 6H11.500V8.500H14.500L7.500 15.500L0.500 8.500H3.500Z" fill="#ACA899"/></g></svg>
<svg class="abs" style="left:443px;top:22px" width="16" height="16" viewBox="0 0 16 16"><rect x="1.500" y="0.500" width="12" height="9" fill="#fff" stroke="#2858C8"/><path d="M1 1.500H14" stroke="#2858C8" stroke-width="1.600"/><path d="M3.500 4.500H11.500M3.500 6.500H11.500" stroke="#5078D8"/><path d="M5 7H10V10H13L7.500 15.500L2 10H5Z" fill="#F03C28" stroke="#E8281E" stroke-width=".6"/></svg>
<svg class="abs" style="left:466px;top:22px" width="16" height="16" viewBox="0 0 16 16"><rect x="1.500" y="0.500" width="12" height="9" fill="#fff" stroke="#2858C8"/><path d="M1 1.500H14" stroke="#2858C8" stroke-width="1.600"/><path d="M3.500 4.500H11.500M3.500 6.500H11.500" stroke="#5078D8"/><path d="M5 15.500H10V11H13L7.500 5.500L2 11H5Z" fill="#F03C28" stroke="#E8281E" stroke-width=".6"/><path d="M6.500 14V10.500H4.500L7.500 7.500L10.500 10.500H8.500V14Z" fill="#FFD23C"/></svg>
<svg class="abs" style="left:488px;top:22px" width="16" height="16" viewBox="0 0 16 16"><rect x="2.500" y="0.500" width="13" height="12" fill="#fff" stroke="#2858C8"/><path d="M2 1.500H16" stroke="#2858C8" stroke-width="1.600"/><path d="M4.500 4.500H13.500M4.500 6.500H13.500M10 8.500H13.500" stroke="#5078D8"/><rect x="0.500" y="7.500" width="8" height="8" fill="#FFD23C" stroke="#E8281E" stroke-width="1.4"/><rect x="3" y="11" width="3" height="2.500" fill="#E8281E"/></svg>
<svg class="abs" style="left:520px;top:22px" width="17" height="17" viewBox="0 0 17 17"><circle cx="8.500" cy="8.500" r="8.200" fill="#5F5F73"/><circle cx="8.500" cy="8.500" r="6" fill="#1464D2"/><path d="M6.300 3.500H10.700V8H13.300L8.500 13.300L3.700 8H6.300Z" fill="#2CA4FF"/></svg>
<div class="abs" style="left:2px;top:47px;width:123px;height:21px;border-top:1px solid #fff;border-left:1px solid #fff;border-right:1px solid #716F64;box-sizing:border-box;border-radius:3px 3px 0 0;background:#F1EFE4"></div>
<div class="abs" style="left:123px;top:49px;width:1px;height:19px;background:#ACA899"></div>
<div class="abs" style="left:178px;top:50px;width:1px;height:17px;background:#7C7A6E"></div><div class="abs" style="left:179px;top:50px;width:1px;height:17px;background:#fff"></div>
<div class="abs" style="left:286px;top:50px;width:1px;height:17px;background:#7C7A6E"></div><div class="abs" style="left:287px;top:50px;width:1px;height:17px;background:#fff"></div>
<div class="abs" style="left:353px;top:50px;width:1px;height:17px;background:#7C7A6E"></div><div class="abs" style="left:354px;top:50px;width:1px;height:17px;background:#fff"></div>
<div class="abs" style="left:420px;top:50px;width:1px;height:17px;background:#7C7A6E"></div><div class="abs" style="left:421px;top:50px;width:1px;height:17px;background:#fff"></div>
<div class="abs" style="left:483px;top:50px;width:1px;height:17px;background:#7C7A6E"></div><div class="abs" style="left:484px;top:50px;width:1px;height:17px;background:#fff"></div>
<div class="abs" style="left:525px;top:50px;width:1px;height:17px;background:#7C7A6E"></div><div class="abs" style="left:526px;top:50px;width:1px;height:17px;background:#fff"></div>
<div class="abs" style="left:603px;top:50px;width:1px;height:17px;background:#7C7A6E"></div><div class="abs" style="left:604px;top:50px;width:1px;height:17px;background:#fff"></div>
<div class="abs" style="left:662px;top:50px;width:1px;height:17px;background:#7C7A6E"></div><div class="abs" style="left:663px;top:50px;width:1px;height:17px;background:#fff"></div>
<div class="abs" style="left:125px;top:68px;width:566px;height:1px;background:#fff"></div>
<div class="abs" style="left:2px;top:68px;width:1px;height:478px;background:#fff"></div>
<svg class="abs" style="left:12px;top:78px;overflow:visible" width="14" height="11" viewBox="0 0 14 11"><path d="M13.500 5.500H3.500" fill="none" stroke="#1C76D8" stroke-width="3"/><path d="M7.700 1L2.600 5.500L7.700 10" fill="none" stroke="#1C76D8" stroke-width="2.800"/></svg>
<svg class="abs" style="left:62px;top:77px" width="14" height="14" viewBox="0 0 14 14"><path d="M7 0.500L13.500 7L7 13.500L0.500 7Z" fill="#2A6CD8" stroke="#1446B4"/><path d="M7 3V8M7 9.500V11.500" stroke="#fff" stroke-width="2"/></svg>
<svg class="abs" style="left:83px;top:76px" width="18" height="14" viewBox="0 0 18 14"><rect x="8" y="3" width="9.500" height="9.500" fill="#fff" stroke="#185A9C" stroke-width="1.200"/><path d="M7.500 3.500H18" stroke="#185A9C" stroke-width="2"/><path d="M1 8H10.500M7 4.500L10.500 8L7 11.500" fill="none" stroke="#185A9C" stroke-width="1.500"/></svg>
<svg class="abs" style="left:108px;top:80px" width="15" height="7" viewBox="0 0 15 7"><rect x="0" y="0" width="15" height="7" fill="#3C6CC8"/><rect x="1" y="1" width="7" height="5" fill="#F0E61E"/><path d="M2.500 2L5.500 5M5.500 2L2.500 5" stroke="#3C6CC8" stroke-width=".9"/><path d="M9.500 2L12.500 5M12.500 2L9.500 5" stroke="#C8DCFF" stroke-width=".9"/></svg>
<svg class="abs" style="left:129px;top:75px" width="17" height="16" viewBox="0 0 17 16"><rect x="0.500" y="4.500" width="11" height="11" fill="#fff" stroke="#1E5CC8"/><path d="M0 6H12" stroke="#1E5CC8" stroke-width="2"/><path d="M2 9.500H5M6.500 9.500H10M2 12.500H5M6.500 12.500H10" stroke="#1E5CC8"/><path d="M7 4L12 1L16.500 2V6L12 8L9 7Z" fill="#6CA0E0" stroke="#3C6CC8" stroke-width=".8"/></svg>
<div class="abs" style="left:159px;top:72px;width:532px;height:20px;background:#2855A3"></div>
<div class="blk" style="left:8px;top:156px;width:184px;height:42px"></div>
<svg class="abs" style="left:177px;top:161px;z-index:3;overflow:visible" width="14" height="11" viewBox="0 0 14 11"><path d="M0 5.5H10" fill="none" stroke="#1C76D8" stroke-width="3"/><path d="M5.800 1L10.900 5.500L5.800 10" fill="none" stroke="#1C76D8" stroke-width="2.800" stroke-linejoin="miter" stroke-linecap="butt"/></svg>
<div class="cb" style="left:80px;top:179px;z-index:3"></div>
<div class="combo" style="left:99px;top:178px"><div class="cy"></div><div class="cbtn"><i></i></div></div>
<div class="blk" style="left:8px;top:244px;width:184px;height:42px"></div>
<svg class="abs" style="left:177px;top:249px;z-index:3;overflow:visible" width="14" height="11" viewBox="0 0 14 11"><path d="M0 5.5H10" fill="none" stroke="#1C76D8" stroke-width="3"/><path d="M5.800 1L10.900 5.500L5.800 10" fill="none" stroke="#1C76D8" stroke-width="2.800" stroke-linejoin="miter" stroke-linecap="butt"/></svg>
<div class="cb" style="left:80px;top:267px;z-index:3"></div>
<div class="combo" style="left:99px;top:266px"><div class="cy"></div><div class="cbtn"><i></i></div></div>
<div class="blk" style="left:8px;top:304px;width:184px;height:42px"></div>
<svg class="abs" style="left:177px;top:309px;z-index:3;overflow:visible" width="14" height="11" viewBox="0 0 14 11"><path d="M0 5.5H10" fill="none" stroke="#1C76D8" stroke-width="3"/><path d="M5.800 1L10.900 5.500L5.800 10" fill="none" stroke="#1C76D8" stroke-width="2.800" stroke-linejoin="miter" stroke-linecap="butt"/></svg>
<div class="cb" style="left:80px;top:327px;z-index:3"></div>
<div class="combo" style="left:99px;top:326px"><div class="cy"></div><div class="cbtn"><i></i></div></div>
<div class="blk" style="left:8px;top:364px;width:184px;height:42px"></div>
<svg class="abs" style="left:177px;top:369px;z-index:3;overflow:visible" width="14" height="11" viewBox="0 0 14 11"><path d="M0 5.5H10" fill="none" stroke="#1C76D8" stroke-width="3"/><path d="M5.800 1L10.900 5.500L5.800 10" fill="none" stroke="#1C76D8" stroke-width="2.800" stroke-linejoin="miter" stroke-linecap="butt"/></svg>
<div class="cb" style="left:80px;top:387px;z-index:3"></div>
<div class="combo" style="left:99px;top:386px"><div class="cy"></div><div class="cbtn"><i></i></div></div>
<div class="blk" style="left:8px;top:424px;width:184px;height:42px"></div>
<svg class="abs" style="left:177px;top:429px;z-index:3;overflow:visible" width="14" height="11" viewBox="0 0 14 11"><path d="M0 5.5H10" fill="none" stroke="#1C76D8" stroke-width="3"/><path d="M5.800 1L10.900 5.500L5.800 10" fill="none" stroke="#1C76D8" stroke-width="2.800" stroke-linejoin="miter" stroke-linecap="butt"/></svg>
<div class="cb" style="left:80px;top:447px;z-index:3"></div>
<div class="combo" style="left:99px;top:446px"><div class="cy"></div><div class="cbtn"><i></i></div></div>
<div class="blk" style="left:8px;top:484px;width:184px;height:42px"></div>
<svg class="abs" style="left:177px;top:489px;z-index:3;overflow:visible" width="14" height="11" viewBox="0 0 14 11"><path d="M0 5.5H10" fill="none" stroke="#1C76D8" stroke-width="3"/><path d="M5.800 1L10.900 5.500L5.800 10" fill="none" stroke="#1C76D8" stroke-width="2.800" stroke-linejoin="miter" stroke-linecap="butt"/></svg>
<div class="cb" style="left:80px;top:507px;z-index:3"></div>
<div class="combo" style="left:99px;top:506px"><div class="cy"></div><div class="cbtn"><i></i></div></div>
<div class="blk" style="left:234px;top:156px;width:41px;height:42px"><svg width="44" height="45" viewBox="0 0 44 45" style="position:absolute;left:-1px;top:-1px"><path d="M12.5 18.5V36.5L33.5 27.5Z" fill="none" stroke="#000" stroke-width="1.1"/><path d="M9 23.5H12M9 31.5H12" stroke="#000" stroke-width="1" shape-rendering="crispEdges"/></svg></div>
<div class="blk" style="left:234px;top:244px;width:41px;height:42px"><svg width="44" height="45" viewBox="0 0 44 45" style="position:absolute;left:-1px;top:-1px"><path d="M12.5 18.5V36.5L33.5 27.5Z" fill="none" stroke="#000" stroke-width="1.1"/><path d="M9 23.5H12M9 31.5H12" stroke="#000" stroke-width="1" shape-rendering="crispEdges"/></svg></div>
<div class="blk" style="left:234px;top:424px;width:41px;height:42px"><svg width="44" height="45" viewBox="0 0 44 45" style="position:absolute;left:-1px;top:-1px"><path d="M12.5 18.5V36.5L33.5 27.5Z" fill="none" stroke="#000" stroke-width="1.1"/><path d="M9 23.5H12M9 31.5H12" stroke="#000" stroke-width="1" shape-rendering="crispEdges"/></svg></div>
<div class="cb" style="left:206px;top:125px;z-index:3"></div>
<div class="vf" style="left:225px;top:124px;width:45px;z-index:3"></div>
<div class="cb" style="left:398px;top:125px;z-index:3"></div>
<div class="vf" style="left:417px;top:124px;width:45px;z-index:3"></div>
<div class="cb" style="left:514px;top:125px;z-index:3"></div>
<div class="vf" style="left:533px;top:124px;width:45px;z-index:3"></div>
<div class="cb" style="left:611px;top:125px;z-index:3"></div>
<div class="vf" style="left:630px;top:124px;width:45px;z-index:3"></div>
<div class="cb" style="left:206px;top:221px;z-index:3"></div>
<div class="vf" style="left:225px;top:220px;width:45px;z-index:3"></div>
<div class="cb" style="left:294px;top:221px;z-index:3"></div>
<div class="vf" style="left:313px;top:220px;width:45px;z-index:3"></div>
<div class="cb" style="left:206px;top:402px;z-index:3"></div>
<div class="vf" style="left:225px;top:401px;width:45px;z-index:3"></div>
<div class="cb" style="left:294px;top:402px;z-index:3"></div>
<div class="vf" style="left:313px;top:401px;width:45px;z-index:3"></div>
<div class="cb" style="left:206px;top:485px;z-index:3"></div>
<div class="vf" style="left:225px;top:484px;width:45px;z-index:3"></div>
<div class="cb" style="left:517px;top:365px;z-index:3"></div>
<div class="vf" style="left:536px;top:364px;width:63px;z-index:3"></div>
<div class="blk" style="left:426px;top:148px;width:81px;height:53px"></div>
<svg class="abs" style="left:492px;top:153px;z-index:3;overflow:visible" width="14" height="11" viewBox="0 0 14 11"><path d="M0 5.5H10" fill="none" stroke="#1C76D8" stroke-width="3"/><path d="M5.800 1L10.900 5.500L5.800 10" fill="none" stroke="#1C76D8" stroke-width="2.800" stroke-linejoin="miter" stroke-linecap="butt"/></svg>
<div class="blk" style="left:426px;top:316px;width:81px;height:145px"></div>
<svg class="abs" style="left:492px;top:321px;z-index:3;overflow:visible" width="14" height="11" viewBox="0 0 14 11"><path d="M0 5.5H10" fill="none" stroke="#1C76D8" stroke-width="3"/><path d="M5.800 1L10.900 5.500L5.800 10" fill="none" stroke="#1C76D8" stroke-width="2.800" stroke-linejoin="miter" stroke-linecap="butt"/></svg>
<svg class="abs" style="left:453px;top:424px;z-index:3" width="32" height="32" viewBox="0 0 32 32"><rect x="0.500" y="0.500" width="31" height="31" fill="none" stroke="#000"/><path d="M4.500 5V26.500H29" fill="none" stroke="#000" stroke-width="1.200"/><path d="M5 21L27 11" stroke="#333" stroke-width="1.200"/></svg>
<div class="abs" style="left:646px;top:166px;width:31px;height:31px;background:#ECE9D8;border-top:1px solid #fff;border-left:1px solid #fff;border-right:2px solid #ACA899;border-bottom:2px solid #ACA899;box-sizing:border-box;z-index:2"><svg width="31" height="31" viewBox="0 0 31 31" style="position:absolute;left:-1px;top:-1px"><path d="M5 8L9.5 12.5H22.5L27 8M5 25L9.5 20.5H22.5L27 25" fill="none" stroke="#000" stroke-width="1.1"/><path d="M0 16.5H31" stroke="#000" shape-rendering="crispEdges"/></svg></div>
<div class="abs" style="left:99px;top:285px;width:317px;height:132px;background:#FFFF00;border:1px solid #000;box-sizing:border-box;z-index:10"></div>
<div class="abs" style="left:100px;top:364px;width:298px;height:13px;background:#316AC5;z-index:11"></div>
<div class="abs" style="left:398px;top:286px;width:17px;height:130px;z-index:11;background:linear-gradient(90deg,#F3F1EC,#FEFEFB 60%,#FFFFFF)"></div>
<svg class="abs" style="left:399px;top:286px;z-index:12" width="16" height="16" viewBox="0 0 16 16"><defs><linearGradient id="sg286" x1="0" y1="0" x2="1" y2="1"><stop offset="0" stop-color="#E1EAFE"/><stop offset="1" stop-color="#AEC2F5"/></linearGradient></defs><rect x="0.500" y="0.500" width="15" height="15" rx="2" fill="url(#sg286)" stroke="#fff"/><rect x="1" y="1" width="14" height="14" rx="2" fill="none" stroke="#B4C8F6"/><path d="M4.500 10L8 6.500L11.500 10" fill="none" stroke="#4D6185" stroke-width="2"/></svg>
<svg class="abs" style="left:399px;top:400px;z-index:12" width="16" height="16" viewBox="0 0 16 16"><defs><linearGradient id="sg400" x1="0" y1="0" x2="1" y2="1"><stop offset="0" stop-color="#E1EAFE"/><stop offset="1" stop-color="#AEC2F5"/></linearGradient></defs><rect x="0.500" y="0.500" width="15" height="15" rx="2" fill="url(#sg400)" stroke="#fff"/><rect x="1" y="1" width="14" height="14" rx="2" fill="none" stroke="#B4C8F6"/><path d="M4.500 6.500L8 10L11.500 6.500" fill="none" stroke="#4D6185" stroke-width="2"/></svg>
<svg class="abs" style="left:399px;top:331px;z-index:12" width="16" height="17" viewBox="0 0 16 17"><rect x="0.500" y="0.500" width="15" height="16" rx="2" fill="#C8D6FB" stroke="#fff"/><rect x="1" y="1" width="14" height="15" rx="2" fill="none" stroke="#B4C8F6"/><path d="M5 5.500H11M5 7.500H11M5 9.500H11M5 11.500H11" stroke="#EEF4FE"/><path d="M5 6.500H11M5 8.500H11M5 10.500H11M5 12.500H11" stroke="#8CB0F8" stroke-width=".6"/></svg>
<div class="abs" style="left:0;top:541px;width:691px;height:29px;background:#ECE9D8;z-index:5"></div>
<div class="abs" style="left:2px;top:541px;width:1px;height:5px;background:#fff;z-index:6"></div>
<div class="abs" style="left:2px;top:546px;width:689px;height:1px;background:#ACA899;z-index:6"></div>
<div class="abs" style="left:0;top:547px;width:691px;height:1px;background:#716F64;z-index:6"></div>
<div class="abs" style="left:0;top:548px;width:691px;height:1px;background:#FFFFFF;z-index:6"></div>
<div class="abs" style="left:3px;top:551px;width:37px;height:17px;background:#2DB84D;z-index:6"></div>
<svg class="abs" style="left:3px;top:551px;z-index:7" width="16" height="16" viewBox="0 0 17 17"><circle cx="8.500" cy="8.500" r="8.200" fill="#5F5F73"/><circle cx="8.500" cy="8.500" r="6" fill="#1464D2"/><path d="M6.300 3.500H10.700V8H13.300L8.500 13.300L3.700 8H6.300Z" fill="#2CA4FF"/></svg>
<div class="abs" style="left:44px;top:551px;width:60px;height:17px;background:#FFFF00;z-index:6"></div>
<svg class="abs" style="left:44px;top:551px;z-index:7" width="17" height="17" viewBox="0 0 17 17"><g transform="translate(2.500,0)"><path d="M4 4.700L10.500 10.500V16L4 9.500Z" fill="#1E78E0"/><path d="M4 4.700L7.300 1L13.700 7L10.500 10.500Z" fill="#fff" stroke="#1E78E0" stroke-width=".8"/><path d="M5.700 2.800L12 8.800" stroke="#1E78E0" stroke-width=".9"/><path d="M10.500 10.500L13.700 7V13L10.500 16Z" fill="#2C6CD8"/><path d="M12.100 9.500V14.500M11 11L12.100 9.300L13.200 10.500" fill="none" stroke="#E4F2FF" stroke-width="1"/></g><path d="M1 8.500H8M5.500 6L8.500 8.500L5.500 11M8 12.500H1M3.500 10.500L1 12.500L3.500 14.500" fill="none" stroke="#F01E28" stroke-width="1.700"/></svg>
<div class="abs" style="left:172px;top:551px;width:119px;height:17px;background:#FF9C00;z-index:6"></div>
<svg class="abs" style="left:172px;top:551px;z-index:7" width="16" height="16" viewBox="0 0 16 16"><path d="M1 9L4.700 12.300L1 15.700Z" fill="#111"/><path d="M4 4.700L10.500 10.500V16L4 9.500Z" fill="#1E78E0"/><path d="M4 4.700L7.300 1L13.700 7L10.500 10.500Z" fill="#fff" stroke="#1E78E0" stroke-width=".8"/><path d="M5.700 2.800L12 8.800" stroke="#1E78E0" stroke-width=".9"/><path d="M10.500 10.500L13.700 7V13L10.500 16Z" fill="#2C6CD8"/><path d="M12.100 9.500V14.500M11 11L12.100 9.300L13.200 10.500" fill="none" stroke="#E4F2FF" stroke-width="1"/></svg>
<span class="t " style="left:-3.5px;top:2px;font-size:11px;color:#000;z-index:3;">e</span>
<span class="t " style="left:15px;top:2px;font-size:11px;color:#000;z-index:3;transform:scaleX(0.9836);">Application data</span>
<span class="t " style="left:105px;top:2px;font-size:11px;color:#000;z-index:3;transform:scaleX(0.9343);"><u>T</u>ools</span>
<span class="t " style="left:141.5px;top:2px;font-size:11px;color:#000;z-index:3;transform:scaleX(0.8980);"><u>?</u></span>
<span class="t " style="left:10px;top:50px;font-size:12px;color:#000;z-index:3;transform:scaleX(0.8705);">Application Parameters</span>
<span class="t " style="left:130px;top:52px;font-size:12px;color:#000;z-index:3;transform:scaleX(0.8597);">FB Editor</span>
<span class="t " style="left:186px;top:52px;font-size:12px;color:#000;z-index:3;transform:scaleX(0.8633);">Terminal assignment</span>
<span class="t " style="left:293px;top:52px;font-size:12px;color:#000;z-index:3;transform:scaleX(0.8866);">Diagnostics</span>
<span class="t " style="left:361px;top:52px;font-size:12px;color:#000;z-index:3;transform:scaleX(0.8703);">Data logger</span>
<span class="t " style="left:427px;top:52px;font-size:12px;color:#000;z-index:3;transform:scaleX(0.8690);">User menu</span>
<span class="t " style="left:490px;top:52px;font-size:12px;color:#000;z-index:3;transform:scaleX(0.8567);">Ports</span>
<span class="t " style="left:532px;top:52px;font-size:12px;color:#000;z-index:3;transform:scaleX(0.8530);">All parameters</span>
<span class="t " style="left:610px;top:52px;font-size:12px;color:#000;z-index:3;transform:scaleX(0.8592);">Properties</span>
<span class="t " style="left:669px;top:52px;font-size:12px;color:#000;z-index:3;transform:scaleX(0.8924);">Docu</span>
<span class="t " style="left:29.5px;top:78px;font-size:11px;color:#000;z-index:3;transform:scaleX(0.9195);"><u>B</u>ack</span>
<span class="t " style="left:164px;top:74px;font-size:12px;color:#fff;z-index:3;transform:scaleX(0.8789);">Overview -&gt; Signal flow</span>
<span class="t " style="left:84.5px;top:180px;font-size:13px;color:#1A50C8;z-index:4;font-weight:bold;transform:scaleX(0.8519);">C</span>
<span class="t " style="left:104px;top:182px;font-size:10px;color:#000;z-index:3;-webkit-text-stroke:0.12px currentColor;transform:scaleX(0.8992);">Not connected</span>
<span class="t " style="left:65.5px;top:160px;font-size:9.5px;color:#5A5A3C;z-index:3;-webkit-text-stroke:0.12px currentColor;transform:scaleX(0.9546);"><u>N</u>ot connected</span>
<span class="t " style="left:13.5px;top:183px;font-size:9.5px;color:#000;z-index:3;-webkit-text-stroke:0.12px currentColor;transform:scaleX(0.9709);">Main speed s..</span>
<span class="t " style="left:84.5px;top:268px;font-size:13px;color:#1A50C8;z-index:4;font-weight:bold;transform:scaleX(0.8519);">C</span>
<span class="t " style="left:102px;top:270px;font-size:10px;color:#0000DC;z-index:3;-webkit-text-stroke:0.12px currentColor;transform:scaleX(0.9588);">0:</span>
<span class="t " style="left:139px;top:270px;font-size:10px;color:#0000DC;z-index:3;-webkit-text-stroke:0.12px currentColor;transform:scaleX(0.8994);">Not con</span>
<span class="t " style="left:65.5px;top:248px;font-size:9.5px;color:#5A5A3C;z-index:3;-webkit-text-stroke:0.12px currentColor;transform:scaleX(0.9546);"><u>N</u>ot connected</span>
<span class="t " style="left:13px;top:271px;font-size:9.5px;color:#000;z-index:3;-webkit-text-stroke:0.12px currentColor;transform:scaleX(0.9697);">Additional spe..</span>
<span class="t " style="left:84.5px;top:328px;font-size:13px;color:#1A50C8;z-index:4;font-weight:bold;transform:scaleX(0.8519);">C</span>
<span class="t " style="left:104px;top:330px;font-size:10px;color:#000;z-index:3;-webkit-text-stroke:0.12px currentColor;transform:scaleX(0.8992);">Not connected</span>
<span class="t " style="left:65.5px;top:308px;font-size:9.5px;color:#5A5A3C;z-index:3;-webkit-text-stroke:0.12px currentColor;transform:scaleX(0.9549);">Not connected</span>
<span class="t " style="left:13.5px;top:331px;font-size:9.5px;color:#000;z-index:3;-webkit-text-stroke:0.12px currentColor;transform:scaleX(0.9786);">Process contr..</span>
<span class="t " style="left:84.5px;top:388px;font-size:13px;color:#1A50C8;z-index:4;font-weight:bold;transform:scaleX(0.8519);">C</span>
<span class="t " style="left:104px;top:390px;font-size:10px;color:#000;z-index:3;-webkit-text-stroke:0.12px currentColor;transform:scaleX(0.8992);">Not connected</span>
<span class="t " style="left:65.5px;top:368px;font-size:9.5px;color:#5A5A3C;z-index:3;-webkit-text-stroke:0.12px currentColor;transform:scaleX(0.9549);">Not connected</span>
<span class="t " style="left:13.5px;top:391px;font-size:9.5px;color:#000;z-index:3;-webkit-text-stroke:0.12px currentColor;transform:scaleX(0.9786);">Process contr..</span>
<span class="t " style="left:84.5px;top:448px;font-size:13px;color:#1A50C8;z-index:4;font-weight:bold;transform:scaleX(0.8519);">C</span>
<span class="t " style="left:104px;top:450px;font-size:10px;color:#000;z-index:3;-webkit-text-stroke:0.12px currentColor;transform:scaleX(0.8992);">Not connected</span>
<span class="t " style="left:65.5px;top:428px;font-size:9.5px;color:#5A5A3C;z-index:3;-webkit-text-stroke:0.12px currentColor;transform:scaleX(0.9549);">Not connected</span>
<span class="t " style="left:13.5px;top:451px;font-size:9.5px;color:#000;z-index:3;-webkit-text-stroke:0.12px currentColor;transform:scaleX(0.9786);">Process contr..</span>
<span class="t " style="left:84.5px;top:508px;font-size:13px;color:#1A50C8;z-index:4;font-weight:bold;transform:scaleX(0.8519);">C</span>
<span class="t " style="left:104px;top:510px;font-size:10px;color:#000;z-index:3;-webkit-text-stroke:0.12px currentColor;transform:scaleX(0.8992);">Not connected</span>
<span class="t " style="left:65.5px;top:488px;font-size:9.5px;color:#5A5A3C;z-index:3;-webkit-text-stroke:0.12px currentColor;transform:scaleX(0.9549);">Not connected</span>
<span class="t " style="left:13.5px;top:511px;font-size:9.5px;color:#000;z-index:3;-webkit-text-stroke:0.12px currentColor;transform:scaleX(0.9786);">Process contr..</span>
<span class="t " style="left:226.5px;top:113px;font-size:8.7px;color:#000;z-index:3;letter-spacing:0.250px;">nIn_a</span>
<span class="t " style="left:210.5px;top:126px;font-size:13px;color:#1A50C8;z-index:4;font-weight:bold;transform:scaleX(0.8519);">C</span>
<span class="t " style="left:228px;top:128px;font-size:10px;color:#000;z-index:4;-webkit-text-stroke:0.12px currentColor;transform:scaleX(0.8886);">0,00</span>
<span class="t " style="left:272px;top:129px;font-size:10px;color:#000;z-index:4;font-weight:bold;transform:scaleX(0.6737);">%</span>
<span class="t " style="left:413px;top:113px;font-size:8.7px;color:#000;z-index:3;letter-spacing:0.170px;">nNSet_a</span>
<span class="t " style="left:402.5px;top:126px;font-size:13px;color:#1A50C8;z-index:4;font-weight:bold;transform:scaleX(0.8519);">C</span>
<span class="t " style="left:420px;top:128px;font-size:10px;color:#000;z-index:4;-webkit-text-stroke:0.12px currentColor;transform:scaleX(0.8886);">0,00</span>
<span class="t " style="left:464px;top:129px;font-size:10px;color:#000;z-index:4;font-weight:bold;transform:scaleX(0.6737);">%</span>
<span class="t " style="left:527.5px;top:113px;font-size:8.7px;color:#000;z-index:3;letter-spacing:0.246px;">nNOut_a</span>
<span class="t " style="left:518.5px;top:126px;font-size:13px;color:#1A50C8;z-index:4;font-weight:bold;transform:scaleX(0.8519);">C</span>
<span class="t " style="left:536px;top:128px;font-size:10px;color:#000;z-index:4;-webkit-text-stroke:0.12px currentColor;transform:scaleX(0.8886);">0,00</span>
<span class="t " style="left:580px;top:129px;font-size:10px;color:#000;z-index:4;font-weight:bold;transform:scaleX(0.6737);">%</span>
<span class="t " style="left:611.5px;top:113px;font-size:8.7px;color:#000;z-index:3;letter-spacing:0.329px;">nSpeedSetValu..</span>
<span class="t " style="left:615.5px;top:126px;font-size:13px;color:#1A50C8;z-index:4;font-weight:bold;transform:scaleX(0.8519);">C</span>
<span class="t " style="left:633px;top:128px;font-size:10px;color:#000;z-index:4;-webkit-text-stroke:0.12px currentColor;transform:scaleX(0.8886);">0,00</span>
<span class="t " style="left:677px;top:129px;font-size:10px;color:#000;z-index:4;font-weight:bold;transform:scaleX(0.6737);">%</span>
<span class="t " style="left:226.5px;top:209px;font-size:8.7px;color:#000;z-index:3;letter-spacing:0.250px;">nIn_a</span>
<span class="t " style="left:210.5px;top:222px;font-size:13px;color:#1A50C8;z-index:4;font-weight:bold;transform:scaleX(0.8519);">C</span>
<span class="t " style="left:228px;top:224px;font-size:10px;color:#000;z-index:4;-webkit-text-stroke:0.12px currentColor;transform:scaleX(0.8886);">0,00</span>
<span class="t " style="left:272px;top:225px;font-size:10px;color:#000;z-index:4;font-weight:bold;transform:scaleX(0.6737);">%</span>
<span class="t " style="left:307px;top:209px;font-size:8.7px;color:#000;z-index:3;letter-spacing:0.324px;">nNAdd_a</span>
<span class="t " style="left:298.5px;top:222px;font-size:13px;color:#1A50C8;z-index:4;font-weight:bold;transform:scaleX(0.8519);">C</span>
<span class="t " style="left:316px;top:224px;font-size:10px;color:#000;z-index:4;-webkit-text-stroke:0.12px currentColor;transform:scaleX(0.8886);">0,00</span>
<span class="t " style="left:360px;top:225px;font-size:10px;color:#000;z-index:4;font-weight:bold;transform:scaleX(0.6737);">%</span>
<span class="t " style="left:226.5px;top:390px;font-size:8.7px;color:#000;z-index:3;letter-spacing:0.250px;">nIn_a</span>
<span class="t " style="left:210.5px;top:403px;font-size:13px;color:#1A50C8;z-index:4;font-weight:bold;transform:scaleX(0.8519);">C</span>
<span class="t " style="left:228px;top:405px;font-size:10px;color:#000;z-index:4;-webkit-text-stroke:0.12px currentColor;transform:scaleX(0.8886);">0,00</span>
<span class="t " style="left:272px;top:406px;font-size:10px;color:#000;z-index:4;font-weight:bold;transform:scaleX(0.6737);">%</span>
<span class="t " style="left:307px;top:390px;font-size:8.7px;color:#000;z-index:3;letter-spacing:0.324px;">nNAdd_a</span>
<span class="t " style="left:298.5px;top:403px;font-size:13px;color:#1A50C8;z-index:4;font-weight:bold;transform:scaleX(0.8519);">C</span>
<span class="t " style="left:316px;top:405px;font-size:10px;color:#000;z-index:4;-webkit-text-stroke:0.12px currentColor;transform:scaleX(0.8886);">0,00</span>
<span class="t " style="left:360px;top:406px;font-size:10px;color:#000;z-index:4;font-weight:bold;transform:scaleX(0.6737);">%</span>
<span class="t " style="left:211.5px;top:473px;font-size:8.7px;color:#000;z-index:3;letter-spacing:0.270px;">nInfluence_a</span>
<span class="t " style="left:210.5px;top:486px;font-size:13px;color:#1A50C8;z-index:4;font-weight:bold;transform:scaleX(0.8519);">C</span>
<span class="t " style="left:228px;top:488px;font-size:10px;color:#000;z-index:4;-webkit-text-stroke:0.12px currentColor;transform:scaleX(0.8886);">0,00</span>
<span class="t " style="left:272px;top:489px;font-size:10px;color:#000;z-index:4;font-weight:bold;transform:scaleX(0.6737);">%</span>
<span class="t " style="left:525.5px;top:353px;font-size:8.7px;color:#000;z-index:3;letter-spacing:0.204px;">PID output value</span>
<span class="t " style="left:521.5px;top:366px;font-size:13px;color:#1A50C8;z-index:4;font-weight:bold;transform:scaleX(0.8519);">C</span>
<span class="t " style="left:539px;top:368px;font-size:10px;color:#000;z-index:4;-webkit-text-stroke:0.12px currentColor;transform:scaleX(0.8886);">0,00</span>
<span class="t " style="left:601px;top:369px;font-size:10px;color:#000;z-index:4;font-weight:bold;transform:scaleX(0.6737);">%</span>
<span class="t clipb" style="left:209px;top:533px;font-size:8.5px;color:#000;z-index:3;letter-spacing:0.446px;">nTorqueMotLim..</span>
<span class="t " style="left:556px;top:291px;font-size:8.5px;color:#000;z-index:3;letter-spacing:0.263px;">C242/0</span>
<span class="t " style="left:444.5px;top:166px;font-size:9.5px;color:#000;z-index:3;-webkit-text-stroke:0.12px currentColor;transform:scaleX(0.9462);">Setpoint</span>
<span class="t " style="left:441px;top:177px;font-size:9.5px;color:#000;z-index:3;-webkit-text-stroke:0.12px currentColor;transform:scaleX(0.9462);"><u>g</u>enerator</span>
<span class="t " style="left:433.5px;top:384px;font-size:9.5px;color:#000;z-index:3;-webkit-text-stroke:0.12px currentColor;transform:scaleX(0.9468);"><u>P</u>ID controller</span>
<span class="t " style="left:101.5px;top:287px;font-size:10px;color:#0000DC;z-index:12;-webkit-text-stroke:0.12px currentColor;transform:scaleX(0.9189);">1016:</span>
<span class="t " style="left:140.5px;top:287px;font-size:10px;color:#0000DC;z-index:12;-webkit-text-stroke:0.12px currentColor;transform:scaleX(0.9161);">Resulting total speed setpoint (LA_NCtrl)</span>
<span class="t " style="left:101.5px;top:300px;font-size:10px;color:#0000DC;z-index:12;-webkit-text-stroke:0.12px currentColor;transform:scaleX(0.9189);">1017:</span>
<span class="t " style="left:140.5px;top:300px;font-size:10px;color:#0000DC;z-index:12;-webkit-text-stroke:0.12px currentColor;transform:scaleX(0.9278);">LA_nCtrl_wFailTypeDomain</span>
<span class="t " style="left:101.5px;top:313px;font-size:10px;color:#0000DC;z-index:12;-webkit-text-stroke:0.12px currentColor;transform:scaleX(0.9189);">1023:</span>
<span class="t " style="left:140.5px;top:313px;font-size:10px;color:#0000DC;z-index:12;-webkit-text-stroke:0.12px currentColor;transform:scaleX(0.9025);">Free output 1 (16-bit signal) (LA_NCtrl)</span>
<span class="t " style="left:101.5px;top:326px;font-size:10px;color:#0000DC;z-index:12;-webkit-text-stroke:0.12px currentColor;transform:scaleX(0.9189);">1024:</span>
<span class="t " style="left:140.5px;top:326px;font-size:10px;color:#0000DC;z-index:12;-webkit-text-stroke:0.12px currentColor;transform:scaleX(0.9025);">Free output 2 (16-bit signal) (LA_NCtrl)</span>
<span class="t " style="left:101.5px;top:339px;font-size:10px;color:#0000DC;z-index:12;-webkit-text-stroke:0.12px currentColor;transform:scaleX(0.9189);">1025:</span>
<span class="t " style="left:140.5px;top:339px;font-size:10px;color:#0000DC;z-index:12;-webkit-text-stroke:0.12px currentColor;transform:scaleX(0.9025);">Free output 3 (16-bit signal) (LA_NCtrl)</span>
<span class="t " style="left:101.5px;top:352px;font-size:10px;color:#0000DC;z-index:12;-webkit-text-stroke:0.12px currentColor;transform:scaleX(0.9189);">1026:</span>
<span class="t " style="left:140.5px;top:352px;font-size:10px;color:#0000DC;z-index:12;-webkit-text-stroke:0.12px currentColor;transform:scaleX(0.9025);">Free output 4 (16-bit signal) (LA_NCtrl)</span>
<span class="t " style="left:101.5px;top:365px;font-size:10px;color:#fff;z-index:12;-webkit-text-stroke:0.12px currentColor;transform:scaleX(0.9316);">16000:</span>
<span class="t " style="left:140.5px;top:365px;font-size:10px;color:#fff;z-index:12;-webkit-text-stroke:0.12px currentColor;transform:scaleX(0.9033);">Analog input 1: Output value</span>
<span class="t " style="left:101.5px;top:378px;font-size:10px;color:#0000DC;z-index:12;-webkit-text-stroke:0.12px currentColor;transform:scaleX(0.9316);">16001:</span>
<span class="t " style="left:140.5px;top:378px;font-size:10px;color:#0000DC;z-index:12;-webkit-text-stroke:0.12px currentColor;transform:scaleX(0.9033);">Analog input 2: Output value</span>
<span class="t " style="left:101.5px;top:391px;font-size:10px;color:#0000DC;z-index:12;-webkit-text-stroke:0.12px currentColor;transform:scaleX(0.9316);">16014:</span>
<span class="t " style="left:140.5px;top:391px;font-size:10px;color:#0000DC;z-index:12;-webkit-text-stroke:0.12px currentColor;transform:scaleX(0.9174);">Digital input 1: Current count value low word</span>
<span class="t " style="left:101.5px;top:404px;font-size:10px;color:#0000DC;z-index:12;-webkit-text-stroke:0.12px currentColor;transform:scaleX(0.9316);">16015:</span>
<span class="t " style="left:140.5px;top:404px;font-size:10px;color:#0000DC;z-index:12;-webkit-text-stroke:0.12px currentColor;transform:scaleX(0.9120);">Digital input 1: Current count value high word</span>
<span class="t " style="left:21.5px;top:554px;font-size:11px;color:#000;z-index:7;transform:scaleX(0.8802);">OK</span>
<span class="t " style="left:63px;top:554px;font-size:11px;color:#000;z-index:7;transform:scaleX(0.8909);">ONLINE</span>
<span class="t " style="left:111px;top:554px;font-size:11px;color:#000;z-index:7;letter-spacing:0.123px;">can:/dev1/</span>
<span class="t " style="left:190.5px;top:554px;font-size:11px;color:#000;z-index:7;transform:scaleX(0.9772);">Controller inhibit set</span>
</body></html>
